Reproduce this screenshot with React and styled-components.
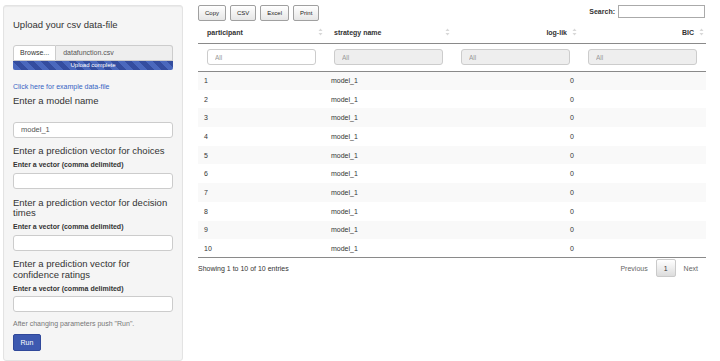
import React from "react";
import styled, { createGlobalStyle } from "styled-components";

const GlobalStyle = createGlobalStyle`
  html, body {
    margin: 0;
    padding: 0;
    background: #fff;
  }
  body {
    font-family: "Liberation Sans", Arial, sans-serif;
    font-size: 7px;
    color: #333;
  }
  * {
    box-sizing: border-box;
  }
`;

const rows = Array.from({ length: 10 }, (_, i) => ({
  participant: i + 1,
  strategy: "model_1",
  loglik: 0,
  bic: "",
}));

const columns = [
  { key: "participant", label: "participant", align: "left", filter: true },
  { key: "strategy", label: "strategy name", align: "left" },
  { key: "loglik", label: "log-lik", align: "right" },
  { key: "bic", label: "BIC", align: "right" },
];

function SortIcon() {
  return (
    <SortSvg width="5" height="8" viewBox="0 0 5 8">
      <path d="M2.5 0.5 L4.5 3 L0.5 3 Z" fill="#d8d8d8" />
      <path d="M2.5 7.5 L4.5 5 L0.5 5 Z" fill="#d8d8d8" />
    </SortSvg>
  );
}

function Sidebar() {
  return (
    <Well>
      <Heading $mt={4.7}>Upload your csv data-file</Heading>
      <FileRow>
        <BrowseButton>Browse...</BrowseButton>
        <FileName>datafunction.csv</FileName>
      </FileRow>
      <Progress>Upload complete</Progress>
      <ExampleLink href="#">Click here for example data-file</ExampleLink>
      <Heading $mt={3.7}>Enter a model name</Heading>
      <TextInput $mt={15.7} defaultValue="model_1" />
      <Heading $mt={8.4}>Enter a prediction vector for choices</Heading>
      <FieldLabel>Enter a vector (comma delimited)</FieldLabel>
      <TextInput $mt={3.3} />
      <Heading $mt={8.4}>
        Enter a prediction vector for decision
        <br />
        times
      </Heading>
      <FieldLabel>Enter a vector (comma delimited)</FieldLabel>
      <TextInput $mt={3.3} />
      <Heading $mt={8.4}>
        Enter a prediction vector for
        <br />
        confidence ratings
      </Heading>
      <FieldLabel>Enter a vector (comma delimited)</FieldLabel>
      <TextInput $mt={2.5} />
      <HelpText>After changing parameters push "Run".</HelpText>
      <RunButton>Run</RunButton>
    </Well>
  );
}

function ResultsTable() {
  return (
    <Main>
      <Toolbar>
        <ButtonGroup>
          <ExportButton>Copy</ExportButton>
          <ExportButton>CSV</ExportButton>
          <ExportButton>Excel</ExportButton>
          <ExportButton>Print</ExportButton>
        </ButtonGroup>
        <SearchBox>
          <SearchLabel>Search:</SearchLabel>
          <SearchInput />
        </SearchBox>
      </Toolbar>

      <Table>
        <colgroup>
          <col style={{ width: 127 }} />
          <col style={{ width: 127 }} />
          <col style={{ width: 127 }} />
          <col style={{ width: 127 }} />
        </colgroup>
        <thead>
          <tr>
            {columns.map((c) => (
              <HeadCell key={c.key}>
                <HeadInner $align={c.align}>
                  <span>{c.label}</span>
                  <SortIcon />
                </HeadInner>
              </HeadCell>
            ))}
          </tr>
          <tr>
            {columns.map((c) => (
              <FilterCell key={c.key}>
                <FilterInput placeholder="All" disabled={!c.filter} />
              </FilterCell>
            ))}
          </tr>
        </thead>
        <tbody>
          {rows.map((r, i) => (
            <BodyRow key={r.participant} $odd={i % 2 === 0}>
              <Cell>{r.participant}</Cell>
              <Cell>{r.strategy}</Cell>
              <Cell $align="right">{r.loglik}</Cell>
              <Cell $align="right">{r.bic}</Cell>
            </BodyRow>
          ))}
        </tbody>
      </Table>

      <Footer>
        <span>Showing 1 to 10 of 10 entries</span>
        <Pager>
          <PageButton>Previous</PageButton>
          <PageButton $current>1</PageButton>
          <PageButton>Next</PageButton>
        </Pager>
      </Footer>
    </Main>
  );
}

export default function App() {
  return (
    <>
      <GlobalStyle />
      <Page>
        <Sidebar />
        <ResultsTable />
      </Page>
    </>
  );
}

const Page = styled.div`
  display: flex;
  align-items: flex-start;
  gap: 15px;
  width: 720px;
  height: 361px;
  padding: 5px 14px 0 3px;
  overflow: hidden;
`;

/* ---------- sidebar ---------- */

const Well = styled.div`
  display: flex;
  flex-direction: column;
  width: 180px;
  height: 356px;
  flex-shrink: 0;
  padding: 9px 9px 0;
  background: #f5f5f5;
  border: 1px solid #e3e3e3;
  border-radius: 3px;
  box-shadow: inset 0 1px 1px rgba(0, 0, 0, 0.05);
`;

const Heading = styled.h4`
  margin: ${(p) => p.$mt}px 0 0;
  font-size: 9.5px;
  line-height: 10.6px;
  font-weight: 500;
  color: #333;
`;

const FileRow = styled.div`
  display: flex;
  height: 16px;
  margin-top: 14.7px;
`;

const BrowseButton = styled.div`
  display: flex;
  align-items: center;
  padding: 0 6px;
  background: #fff;
  border: 1px solid #ccc;
  border-radius: 3px 0 0 0;
  font-size: 7px;
  color: #333;
`;

const FileName = styled.div`
  flex: 1;
  display: flex;
  align-items: center;
  padding: 0 7px;
  background: #eee;
  border: 1px solid #ccc;
  border-left: 0;
  border-radius: 0 3px 0 0;
  font-size: 7px;
  color: #555;
`;

const Progress = styled.div`
  height: 9.5px;
  line-height: 9.5px;
  text-align: center;
  font-size: 6px;
  color: #fff;
  border-radius: 0 0 2px 2px;
  background-color: #4a68bd;
  background-image: linear-gradient(
    45deg,
    rgba(30, 50, 130, 0.5) 25%,
    transparent 25%,
    transparent 50%,
    rgba(30, 50, 130, 0.5) 50%,
    rgba(30, 50, 130, 0.5) 75%,
    transparent 75%,
    transparent
  );
  background-size: 14px 14px;
`;

const ExampleLink = styled.a`
  margin-top: 11.5px;
  font-size: 7px;
  line-height: 10px;
  color: #3564c4;
  text-decoration: none;
`;

const FieldLabel = styled.label`
  margin-top: 3px;
  font-size: 7px;
  line-height: 10px;
  font-weight: bold;
  color: #333;
`;

const TextInput = styled.input`
  height: 16px;
  margin-top: ${(p) => p.$mt}px;
  padding: 0 7px;
  background: #fff;
  border: 1px solid #ccc;
  border-radius: 3px;
  font-family: inherit;
  font-size: 7.5px;
  line-height: 14px;
  color: #555;
  outline: none;
`;

const HelpText = styled.div`
  margin-top: 7px;
  font-size: 7px;
  line-height: 10px;
  color: #777;
`;

const RunButton = styled.button`
  align-self: flex-start;
  height: 17px;
  margin-top: 5px;
  padding: 0 6.5px;
  background: #3d59b0;
  border: 1px solid #30489a;
  border-radius: 2px;
  font-family: inherit;
  font-size: 7px;
  color: #fff;
`;

/* ---------- main ---------- */

const Main = styled.div`
  display: flex;
  flex-direction: column;
  width: 508px;
`;

const Toolbar = styled.div`
  display: flex;
  justify-content: space-between;
  align-items: flex-start;
`;

const ButtonGroup = styled.div`
  display: flex;
  gap: 4px;
`;

const ExportButton = styled.button`
  appearance: none;
  height: 16px;
  padding: 0 6px;
  background: linear-gradient(#ffffff, #e6e6e6);
  border: 1px solid #a0a0a0;
  border-radius: 2px;
  font-family: inherit;
  font-size: 6px;
  font-weight: normal;
  color: #222;
`;

const SearchBox = styled.div`
  display: flex;
  align-items: center;
  gap: 3px;
  padding-right: 1px;
`;

const SearchLabel = styled.span`
  font-size: 7px;
  font-weight: bold;
  color: #333;
`;

const SearchInput = styled.input`
  width: 87px;
  height: 12.5px;
  padding: 0 3px;
  border: 1px solid #aaa;
  border-radius: 0;
  outline: none;
`;

const Table = styled.table`
  width: 508px;
  margin-top: 1px;
  border-collapse: collapse;
  table-layout: fixed;
  border-bottom: 1px solid #8a8a8a;
`;

const HeadCell = styled.th`
  height: 21px;
  padding: 0 2px 0 9px;
  border-bottom: 1px solid #8a8a8a;
  font-size: 7px;
  font-weight: bold;
  color: #333;
`;

const HeadInner = styled.div`
  display: flex;
  align-items: center;
  justify-content: ${(p) => (p.$align === "right" ? "flex-end" : "space-between")};
  gap: 5px;
`;

const SortSvg = styled.svg`
  display: block;
  flex-shrink: 0;
`;

const FilterCell = styled.th`
  height: 28px;
  padding: 0 0 0 9px;
  border-bottom: 1px solid #8a8a8a;
  text-align: left;
`;

const FilterInput = styled.input`
  width: 109px;
  height: 16.5px;
  padding: 0 7px;
  background: #fff;
  border: 1px solid #ccc;
  border-radius: 3px;
  font-family: inherit;
  font-size: 6.5px;
  outline: none;

  &:disabled {
    background: #eee;
  }

  &::placeholder {
    color: #999;
  }
`;

const BodyRow = styled.tr`
  height: 18.7px;
  background: ${(p) => (p.$odd ? "#f9f9f9" : "#fff")};

  & + & td {
    border-top: 1px solid #ddd;
  }
`;

const Cell = styled.td`
  padding: 0 5px 0 6px;
  text-align: ${(p) => p.$align || "left"};
  font-size: 7px;
  color: #333;
`;

const Footer = styled.div`
  display: flex;
  justify-content: space-between;
  align-items: center;
  margin-top: 1px;
  font-size: 7px;
  color: #333;
`;

const Pager = styled.div`
  display: flex;
  align-items: center;
`;

const PageButton = styled.span`
  display: flex;
  align-items: center;
  height: 18px;
  padding: 0 7px;
  border: 1px solid ${(p) => (p.$current ? "#cacaca" : "transparent")};
  border-radius: 2px;
  background: ${(p) => (p.$current ? "linear-gradient(#fff, #dcdcdc)" : "none")};
  color: ${(p) => (p.$current ? "#333" : "#666")};
  font-size: 7px;
`;
